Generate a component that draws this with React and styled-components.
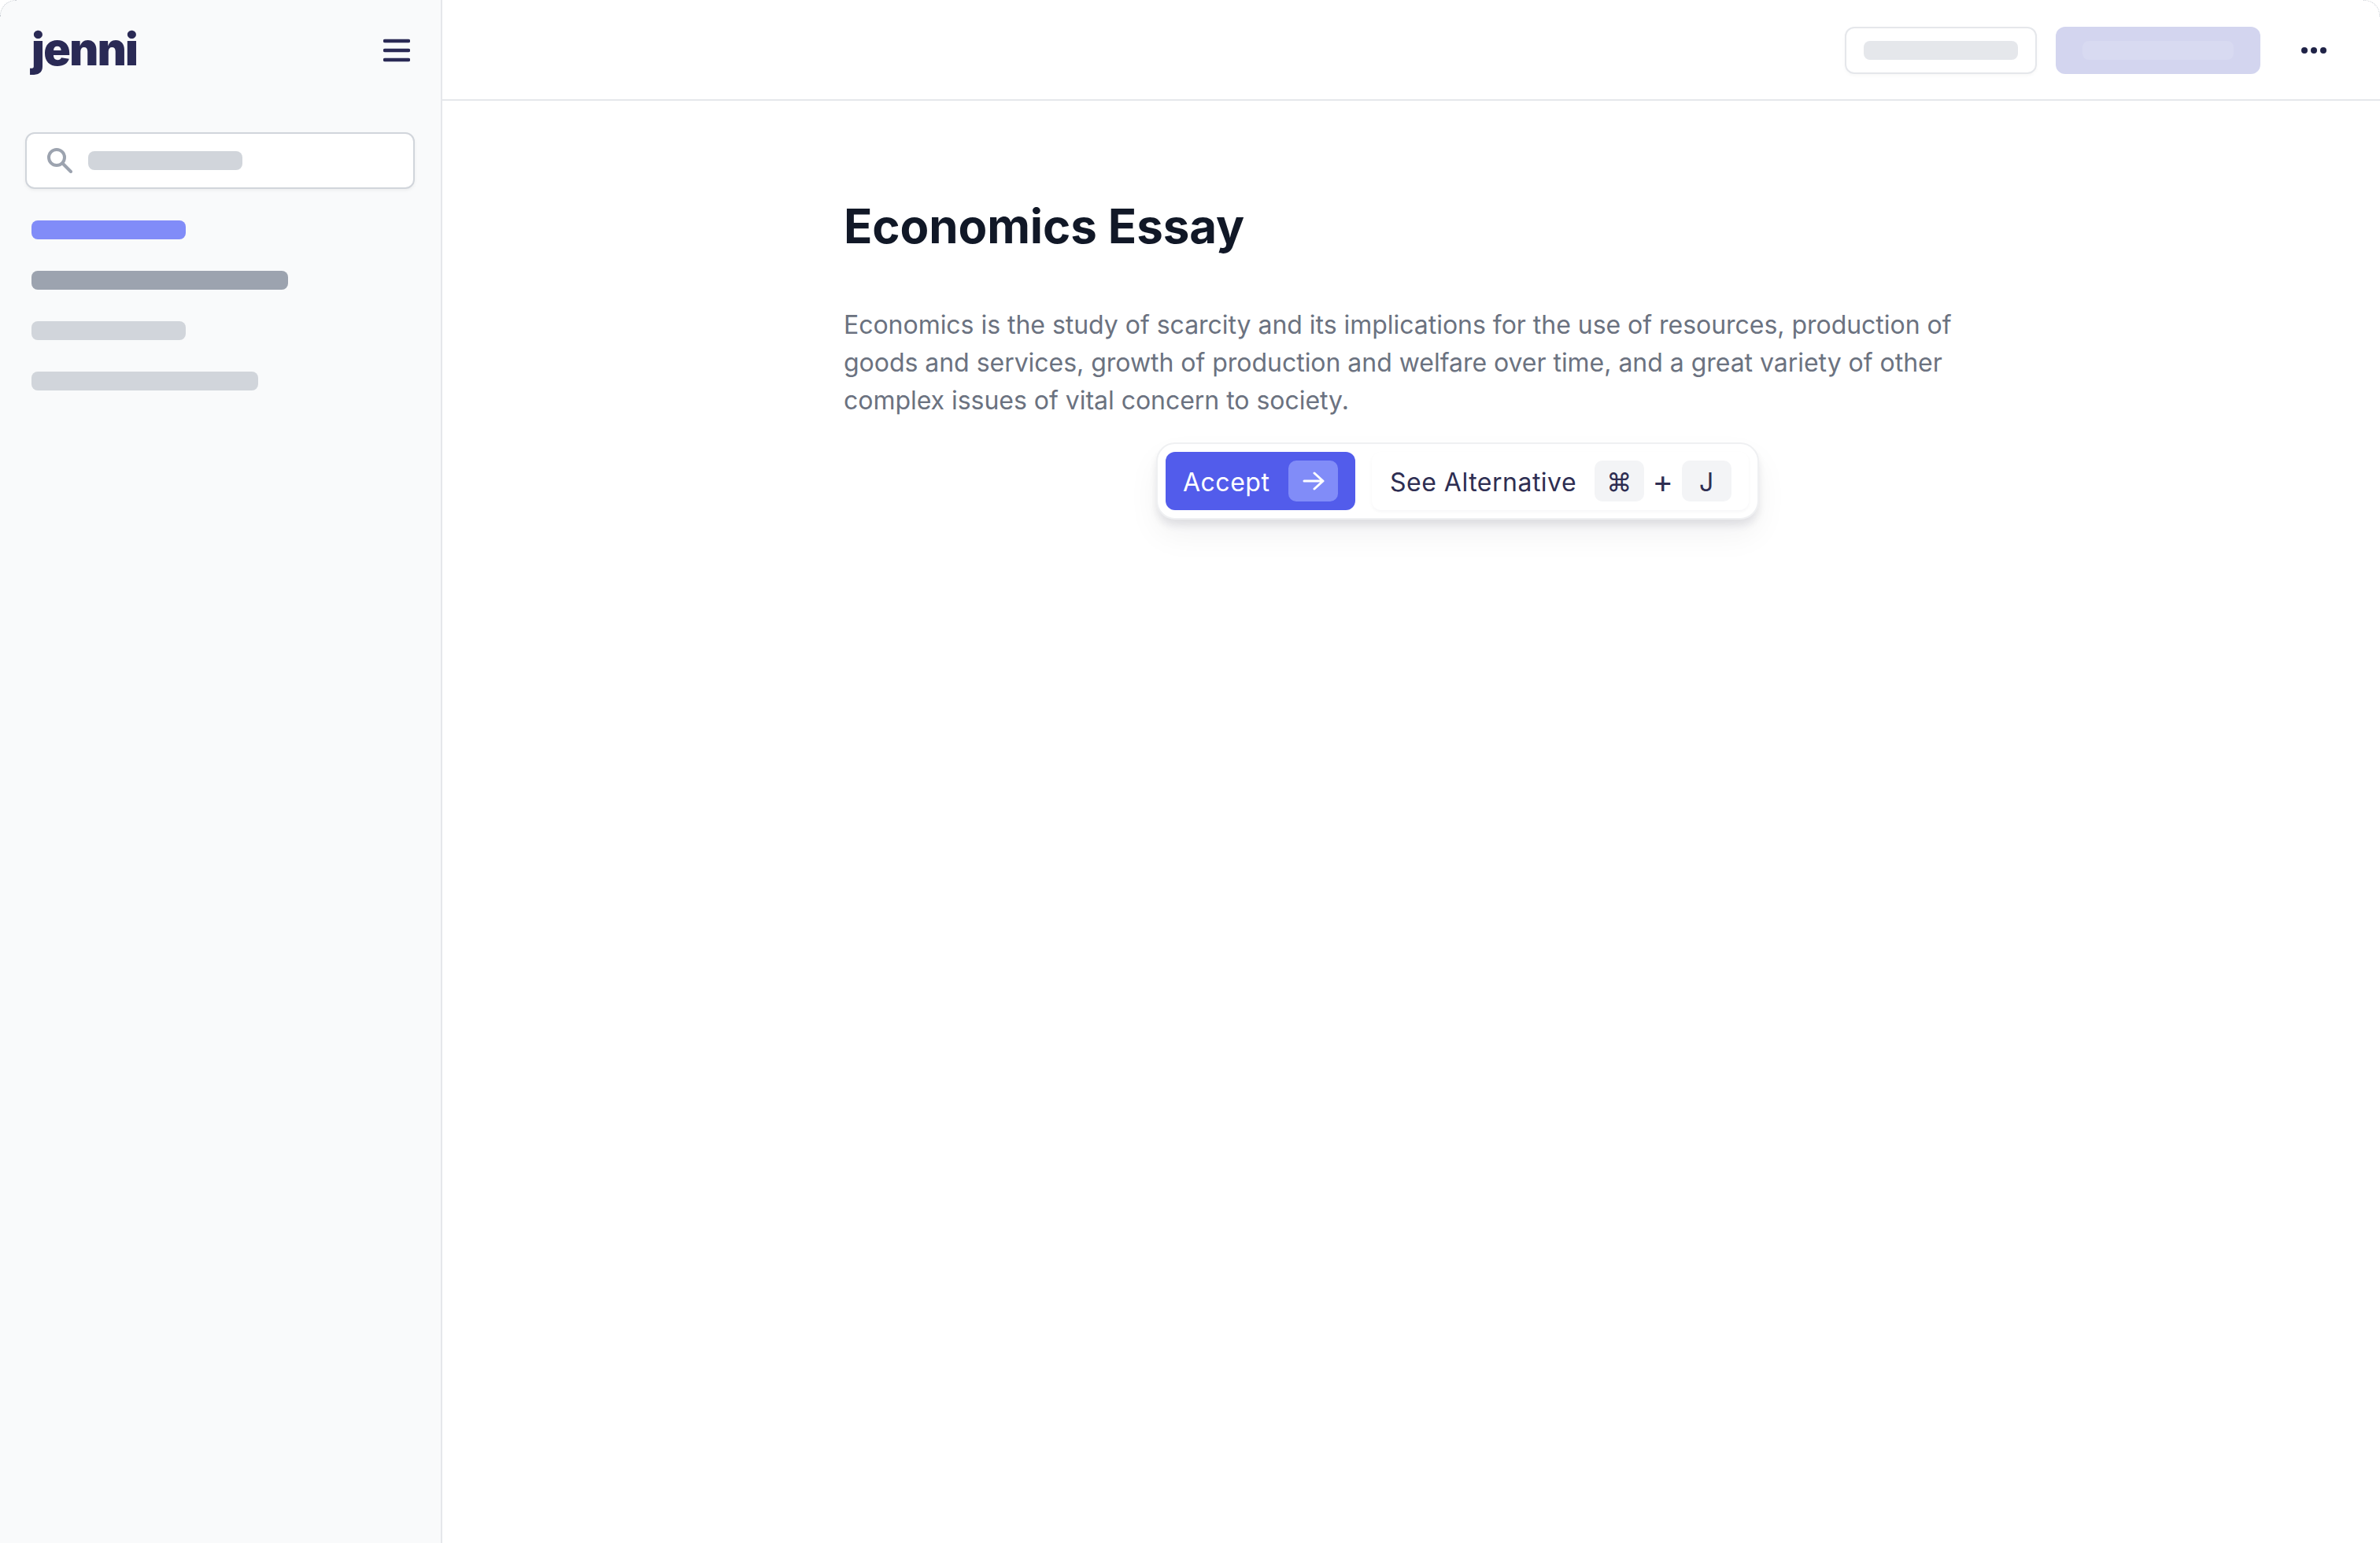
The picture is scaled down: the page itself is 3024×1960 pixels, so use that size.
import styled, { createGlobalStyle } from 'styled-components';

const GlobalStyle = createGlobalStyle`
  html, body {
    margin: 0;
    padding: 0;
    background: #fff;
  }

  body {
    font-family: Inter, "Noto Sans", sans-serif;
  }
`;

const navBars = [
  { width: 196, color: '#818cf8' },
  { width: 326, color: '#9ca3af' },
  { width: 196, color: '#d1d5db' },
  { width: 288, color: '#d1d5db' },
];

const App = () => {
  return (
    <Page>
      <GlobalStyle />
      <Sidebar>
        <SidebarHeader>
          <Logo>jenni</Logo>
          <MenuIcon viewBox="0 0 34 30">
            <path d="M2 3h30M2 15h30M2 27h30" />
          </MenuIcon>
        </SidebarHeader>
        <SearchBox>
          <SearchIcon viewBox="0 0 32 32">
            <circle cx="12" cy="12" r="10" />
            <path d="M19.5 19.5L30 30" />
          </SearchIcon>
          <Bar $width={196} $color="#d1d5db" />
        </SearchBox>
        <NavList>
          {navBars.map((bar, i) => (
            <Bar key={i} $width={bar.width} $color={bar.color} />
          ))}
        </NavList>
      </Sidebar>
      <Main>
        <TopBar>
          <GhostButton>
            <Bar $width={196} $color="#e5e7eb" />
          </GhostButton>
          <PrimaryButton>
            <Bar $width={192} $color="#d8daf1" />
          </PrimaryButton>
          <MoreDots>
            <span />
            <span />
            <span />
          </MoreDots>
        </TopBar>
        <Document>
          <Title>Economics Essay</Title>
          <Body>
            Economics is the study of scarcity and its implications for the use of resources, production of goods and services, growth of production and welfare over time, and a great variety of other complex issues of vital concern to society.
          </Body>
          <Suggestion>
            <AcceptButton>
              <ButtonLabel>Accept</ButtonLabel>
              <ArrowBox>
                <svg width="28" height="24" viewBox="0 0 28 24" fill="none" stroke="#fff" strokeWidth="3" strokeLinecap="round" strokeLinejoin="round">
                  <path d="M2 12h24M15 2l11 10-11 10" />
                </svg>
              </ArrowBox>
            </AcceptButton>
            <AlternativeButton>
              <ButtonLabel>See Alternative</ButtonLabel>
              <Shortcut>
                <Key>⌘</Key>
                <Plus>+</Plus>
                <Key>J</Key>
              </Shortcut>
            </AlternativeButton>
          </Suggestion>
        </Document>
      </Main>
    </Page>
  );
};

export default App;

const Page = styled.div`
  position: relative;
  display: flex;
  min-height: 1960px;
  width: 3024px;
  background: #fff;

  /* faint rounded window corners */
  &::before,
  &::after {
    content: '';
    position: absolute;
    top: 0;
    width: 20px;
    height: 20px;
    border-top: 1px dotted #c8ccd2;
  }

  &::before {
    left: 0;
    border-left: 1px dotted #c8ccd2;
    border-top-left-radius: 20px;
  }

  &::after {
    right: 0;
    border-right: 1px dotted #c8ccd2;
    border-top-right-radius: 20px;
  }
`;

const Sidebar = styled.aside`
  width: 560px;
  flex-shrink: 0;
  box-sizing: content-box;
  background: #f9fafb;
  border-right: 2px solid #e5e7eb;
  border-top-left-radius: 20px;
`;

const SidebarHeader = styled.div`
  display: flex;
  align-items: center;
  justify-content: space-between;
  height: 128px;
  padding: 0 39px 0 40px;
  box-sizing: border-box;
`;

const Logo = styled.div`
  margin-top: -3px;
  font-size: 57px;
  font-weight: 900;
  letter-spacing: -1.6px;
  line-height: 1;
  color: #2a2a55;
`;

const MenuIcon = styled.svg`
  width: 34px;
  height: 30px;
  fill: none;
  stroke: #2a2a55;
  stroke-width: 4.5;
  stroke-linecap: round;
`;

const SearchBox = styled.div`
  display: flex;
  align-items: center;
  gap: 20px;
  width: 495px;
  height: 72px;
  margin: 40px 0 0 32px;
  padding-left: 26px;
  box-sizing: border-box;
  background: #fff;
  border: 2px solid #d1d5db;
  border-radius: 12px;
  box-shadow: 0 2px 4px rgba(0, 0, 0, 0.05);
`;

const SearchIcon = styled.svg`
  width: 32px;
  height: 32px;
  fill: none;
  stroke: #9ca3af;
  stroke-width: 4;
  stroke-linecap: round;
`;

const Bar = styled.div`
  width: ${(p) => p.$width}px;
  height: 24px;
  background: ${(p) => p.$color};
  border-radius: 8px;
`;

const NavList = styled.div`
  display: flex;
  flex-direction: column;
  gap: 40px;
  margin-top: 40px;
  padding-left: 40px;
`;

const Main = styled.main`
  flex: 1;
  min-width: 0;
`;

const TopBar = styled.header`
  display: flex;
  align-items: center;
  justify-content: flex-end;
  height: 128px;
  padding: 2px 68px 0 0;
  box-sizing: border-box;
  border-bottom: 2px solid #e5e7eb;
`;

const GhostButton = styled.div`
  display: flex;
  align-items: center;
  justify-content: center;
  width: 244px;
  height: 60px;
  box-sizing: border-box;
  border: 2px solid #e5e7eb;
  border-radius: 12px;
  box-shadow: 0 2px 4px rgba(0, 0, 0, 0.03);
`;

const PrimaryButton = styled.div`
  display: flex;
  align-items: center;
  justify-content: center;
  width: 260px;
  height: 60px;
  margin-left: 24px;
  background: #d3d5ef;
  border-radius: 12px;
`;

const MoreDots = styled.div`
  display: flex;
  gap: 4px;
  margin-left: 52px;

  span {
    width: 8px;
    height: 8px;
    border-radius: 50%;
    background: #1f2347;
  }
`;

const Document = styled.div`
  padding: 123px 0 0 510px;
`;

const Title = styled.h1`
  margin: 0;
  font-size: 60px;
  font-weight: 700;
  line-height: 72px;
  letter-spacing: -0.1px;
  color: #111827;
`;

const Body = styled.p`
  width: 1420px;
  margin: 66px 0 0;
  font-size: 32px;
  line-height: 48px;
  letter-spacing: -0.03px;
  color: #6b7280;
`;

const Suggestion = styled.div`
  display: flex;
  align-items: center;
  gap: 21px;
  width: 766px;
  height: 98px;
  margin: 29px 0 0 397px;
  padding: 0 11px 0 10px;
  box-sizing: border-box;
  background: #fff;
  border: 2px solid #eff0f2;
  border-radius: 24px;
  box-shadow: 0 8px 10px rgba(17, 24, 39, 0.09), 0 20px 40px rgba(17, 24, 39, 0.05);
`;

const AcceptButton = styled.div`
  display: flex;
  align-items: center;
  justify-content: space-between;
  width: 241px;
  height: 74px;
  padding: 0 22px;
  box-sizing: border-box;
  background: #525ceb;
  border-radius: 12px;
  font-size: 32px;
  letter-spacing: 0.5px;
  color: #fff;
`;

const ButtonLabel = styled.span`
  padding-top: 2px;
`;

const ArrowBox = styled.span`
  display: flex;
  align-items: center;
  justify-content: center;
  width: 63px;
  height: 52px;
  background: #818cf8;
  border-radius: 10px;
`;

const AlternativeButton = styled.div`
  display: flex;
  align-items: center;
  justify-content: space-between;
  width: 479px;
  height: 74px;
  padding: 0 22px 0 23px;
  box-sizing: border-box;
  background: #fff;
  border-radius: 12px;
  box-shadow: 0 2px 4px rgba(17, 24, 39, 0.04);
  font-size: 32px;
  letter-spacing: 0.5px;
  color: #2e2e52;
`;

const Shortcut = styled.div`
  display: flex;
  align-items: center;
`;

const Key = styled.span`
  display: flex;
  align-items: center;
  justify-content: center;
  width: 63px;
  height: 52px;
  padding-top: 2px;
  box-sizing: border-box;
  background: #f3f4f6;
  border-radius: 10px;
  font-size: 32px;
`;

const Plus = styled.span`
  width: 48px;
  padding-top: 2px;
  font-size: 40px;
  line-height: 1;
  text-align: center;
`;
